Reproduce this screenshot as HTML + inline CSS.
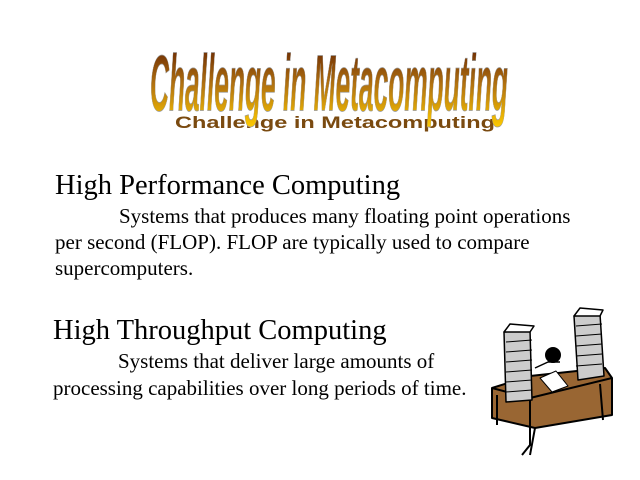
<!DOCTYPE html>
<html><head><style>
html,body{margin:0;padding:0;background:#fff;width:640px;height:480px;overflow:hidden;position:relative;font-family:"Liberation Serif",serif;color:#000}
.t{position:absolute;white-space:nowrap}
.h{font-size:28.5px}
.b{font-size:21px}
</style></head><body>
<svg width="640" height="480" style="position:absolute;left:0;top:0">
<defs>
<linearGradient id="g" x1="0" y1="0" x2="0" y2="1">
<stop offset="0" stop-color="#5a1a00"/><stop offset="0.5" stop-color="#b07010"/><stop offset="1" stop-color="#ffcc00"/>
</linearGradient>
</defs>
<text x="175" y="128" font-family="Liberation Sans Narrow,Liberation Sans,sans-serif" font-weight="bold" font-size="17" fill="#7a4a10" textLength="320" lengthAdjust="spacingAndGlyphs">Challenge in Metacomputing</text>
<text x="150" y="111" font-family="Liberation Sans Narrow,Liberation Sans,sans-serif" font-weight="bold" font-style="italic" font-size="84" fill="url(#g)" stroke="#999" stroke-width="0.8" textLength="358" lengthAdjust="spacingAndGlyphs" transform="matrix(1,0,0,0.95,0,5)">Challenge in Metacomputing</text>
<g stroke="#000" stroke-width="2" stroke-linejoin="round">
<path d="M492 388 L530 376 L605 368 L612 378 L612 415 L535 428 L492 418 Z" fill="#996633"/>
<path d="M492 388 L530 398 L612 378" fill="none"/>
<path d="M530 398 L530 445 L522 455 M600 384 L603 420 M497 395 L497 425 M535 428 L530 455" fill="none"/>
<path d="M504 332 L530 330 L532 400 L506 402 Z" fill="#ccc" stroke-width="1.5"/>
<path d="M504 332 L510 324 L534 326 L530 332 Z" fill="#fff" stroke-width="1.5"/>
<path d="M574 316 L600 314 L604 376 L578 380 Z" fill="#ccc" stroke-width="1.5"/>
<path d="M574 316 L580 308 L603 310 L600 316 Z" fill="#fff" stroke-width="1.5"/>
<g stroke-width="1" fill="none">
<path d="M506 342 L532 340 M506 352 L532 350 M506 362 L532 360 M506 372 L532 370 M506 382 L532 380 M506 392 L532 390"/>
<path d="M576 326 L602 324 M576 336 L602 334 M576 346 L602 344 M576 356 L602 354 M576 366 L602 364"/>
</g>
<path d="M540 378 L556 371 L568 386 L552 392 Z" fill="#fff" stroke-width="1"/>
<circle cx="553" cy="355" r="7" fill="#000"/>
<path d="M535 368 L548 362 L560 362" fill="none" stroke-width="1.5"/>
</g>
</svg>
<div class="t h" style="left:55px;top:170px">High Performance Computing</div>
<div class="t b" style="left:119px;top:204px">Systems that produces many floating point operations</div>
<div class="t b" style="left:55px;top:230px">per second (FLOP). FLOP are typically used to compare</div>
<div class="t b" style="left:55px;top:256px">supercomputers.</div>
<div class="t h" style="left:53px;top:315px">High Throughput Computing</div>
<div class="t b" style="left:118px;top:349px">Systems that deliver large amounts of</div>
<div class="t b" style="left:53px;top:376px">processing capabilities over long periods of time.</div>
</body></html>
